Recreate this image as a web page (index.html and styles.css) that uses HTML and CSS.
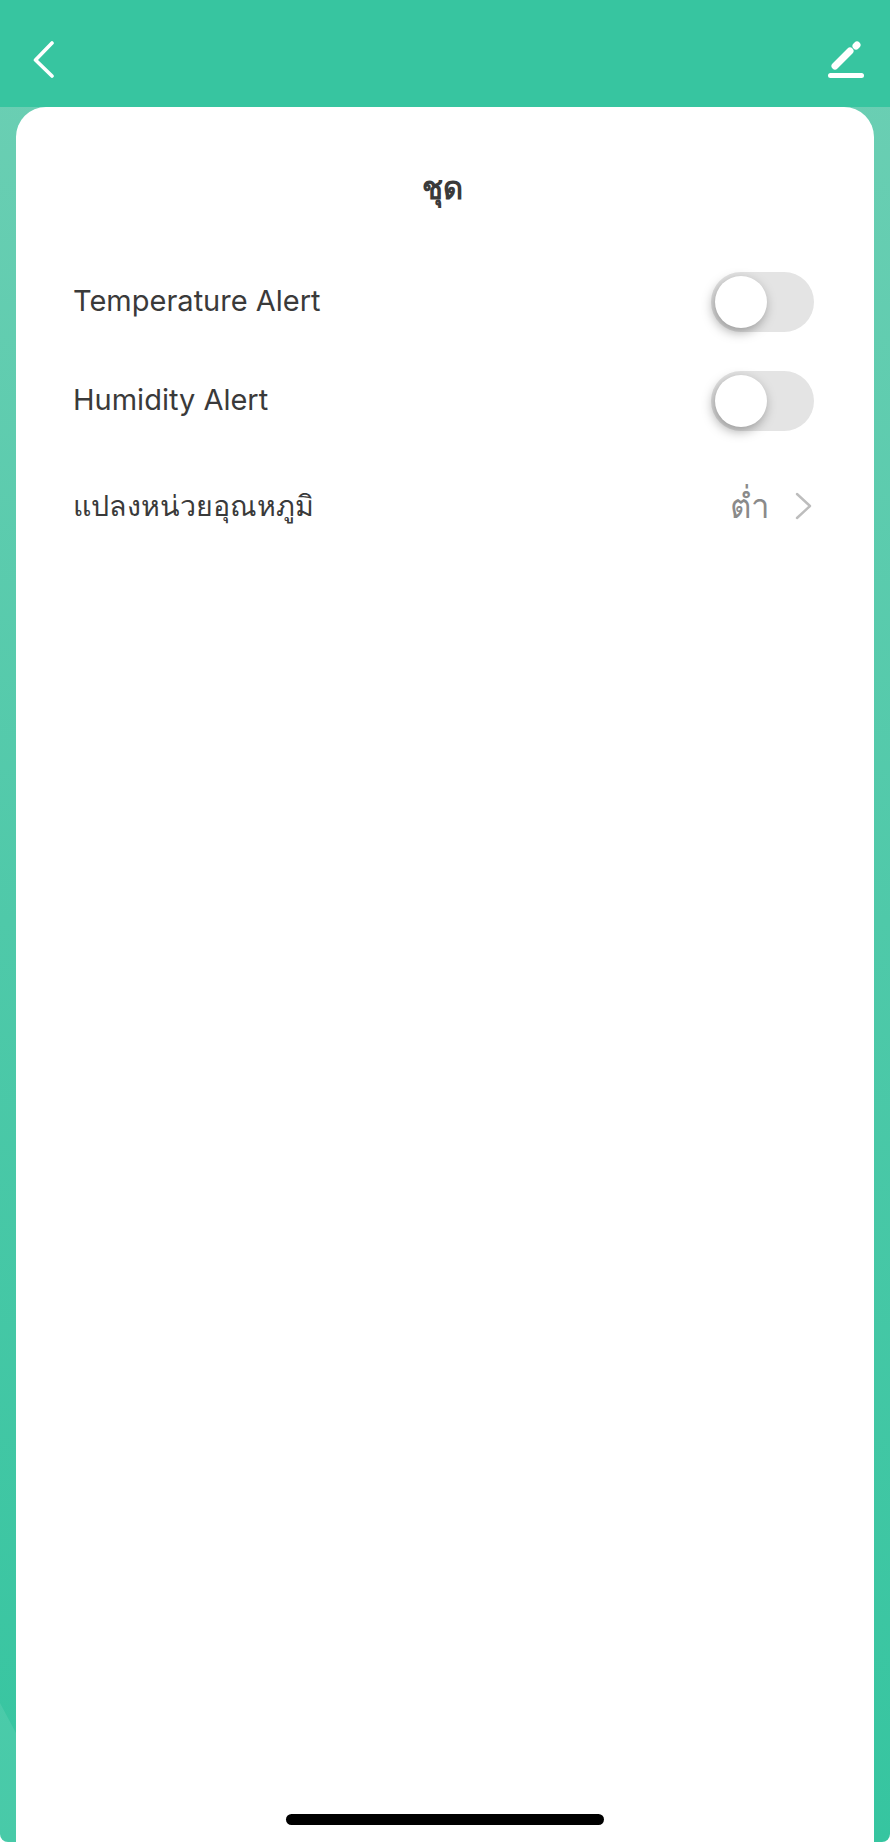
FILE: index.html
```html
<!DOCTYPE html>
<html lang="th">
<head>
    <meta charset="UTF-8">
    <meta name="viewport" content="width=device-width, initial-scale=1.0">
    <title>ชุด</title>
    <link rel="stylesheet" href="styles.css">
</head>
<body>
    <div class="screen">
        <header class="topbar">
            <svg class="icon-back" width="28" height="42" viewBox="0 0 28 42">
                <path d="M19 5 L2.5 22 L19 38" fill="none" stroke="#fff" stroke-width="3.6" stroke-linecap="round" stroke-linejoin="round"/>
            </svg>
            <svg class="icon-edit" width="40" height="40" viewBox="0 0 40 40">
                <path d="M9 28 L24 13" fill="none" stroke="#fff" stroke-width="7" stroke-linecap="round"/>
                <path d="M30 8 L31 7" fill="none" stroke="#fff" stroke-width="7" stroke-linecap="round"/>
                <rect x="2" y="35" width="36" height="5" rx="2.5" fill="#fff"/>
            </svg>
        </header>

        <main class="card">
            <h1 class="title">ชุด</h1>

            <div class="row row-alert">
                <span class="label">Temperature Alert</span>
                <div class="toggle"><div class="knob"></div></div>
            </div>
            <div class="row row-alert">
                <span class="label">Humidity Alert</span>
                <div class="toggle"><div class="knob"></div></div>
            </div>
            <div class="row row-unit">
                <span class="label">แปลงหน่วยอุณหภูมิ</span>
                <div class="value">
                    <span>ต่ำ</span>
                    <svg width="18" height="28" viewBox="0 0 18 28">
                        <path d="M2 2 L15 14 L2 26" fill="none" stroke="#bdbdbd" stroke-width="2.4" stroke-linecap="round" stroke-linejoin="round"/>
                    </svg>
                </div>
            </div>

            <div class="home-bar"></div>
        </main>
    </div>
</body>
</html>
```

FILE: styles.css
```css
body {
    margin: 0;
    background-color: #fff;
    font-family: Inter, "Noto Sans", "Noto Sans CJK SC", sans-serif;
    color: #3a3a3a;
}

.screen {
    width: 890px;
    height: 1842px;
    overflow: hidden;
    display: flex;
    flex-direction: column;
    position: relative;
    border-radius: 0 0 8px 8px;
    background: linear-gradient(to bottom, #6dcfb4 0%, #4fc9a9 50%, #36c5a0 100%);
}

/* lighter fold at the bottom of the left strip */
.screen::after {
    content: "";
    position: absolute;
    left: 0;
    top: 1703px;
    width: 16px;
    height: 139px;
    background-color: rgba(255, 255, 255, 0.09);
    clip-path: polygon(0 0, 100% 30px, 100% 100%, 0 100%);
}

.topbar {
    height: 107px;
    flex-shrink: 0;
    background-color: #37c5a0;
    display: flex;
    justify-content: space-between;
    padding: 38px 24px 0 33px;
    box-sizing: border-box;
}

.card {
    flex: 1;
    margin: 0 16px;
    padding: 0 60px 0 57px;
    background-color: #fff;
    border-radius: 30px 30px 0 0;
    position: relative;
}

.title {
    margin: 0;
    padding: 61px 3px 0 0;
    text-align: center;
    font-size: 31px;
    line-height: 40px;
    font-weight: 700;
}

.row {
    display: flex;
    justify-content: space-between;
    align-items: center;
}

.row-alert {
    height: 99px;
}

.row-alert:first-of-type {
    margin-top: 44px;
}

.row-alert .label {
    margin-bottom: 2px;
}

.row-unit {
    height: 80px;
    margin-top: 16px;
}

.label {
    font-size: 29px;
}

.row-unit .label {
    font-size: 28.6px;
}

.toggle {
    width: 103px;
    height: 60px;
    border-radius: 30px;
    background-color: #e4e4e4;
    position: relative;
}

.knob {
    position: absolute;
    left: 4px;
    top: 4px;
    width: 52px;
    height: 52px;
    border-radius: 50%;
    background-color: #fff;
    box-shadow: -2px 4px 12px rgba(0, 0, 0, 0.35);
}

.value {
    display: flex;
    align-items: center;
    gap: 25px;
    margin-right: 1px;
    font-size: 33px;
    color: #8a8a8a;
}

.home-bar {
    position: absolute;
    left: 270px;
    bottom: 17px;
    width: 318px;
    height: 11px;
    border-radius: 6px;
    background-color: #000;
}
```
